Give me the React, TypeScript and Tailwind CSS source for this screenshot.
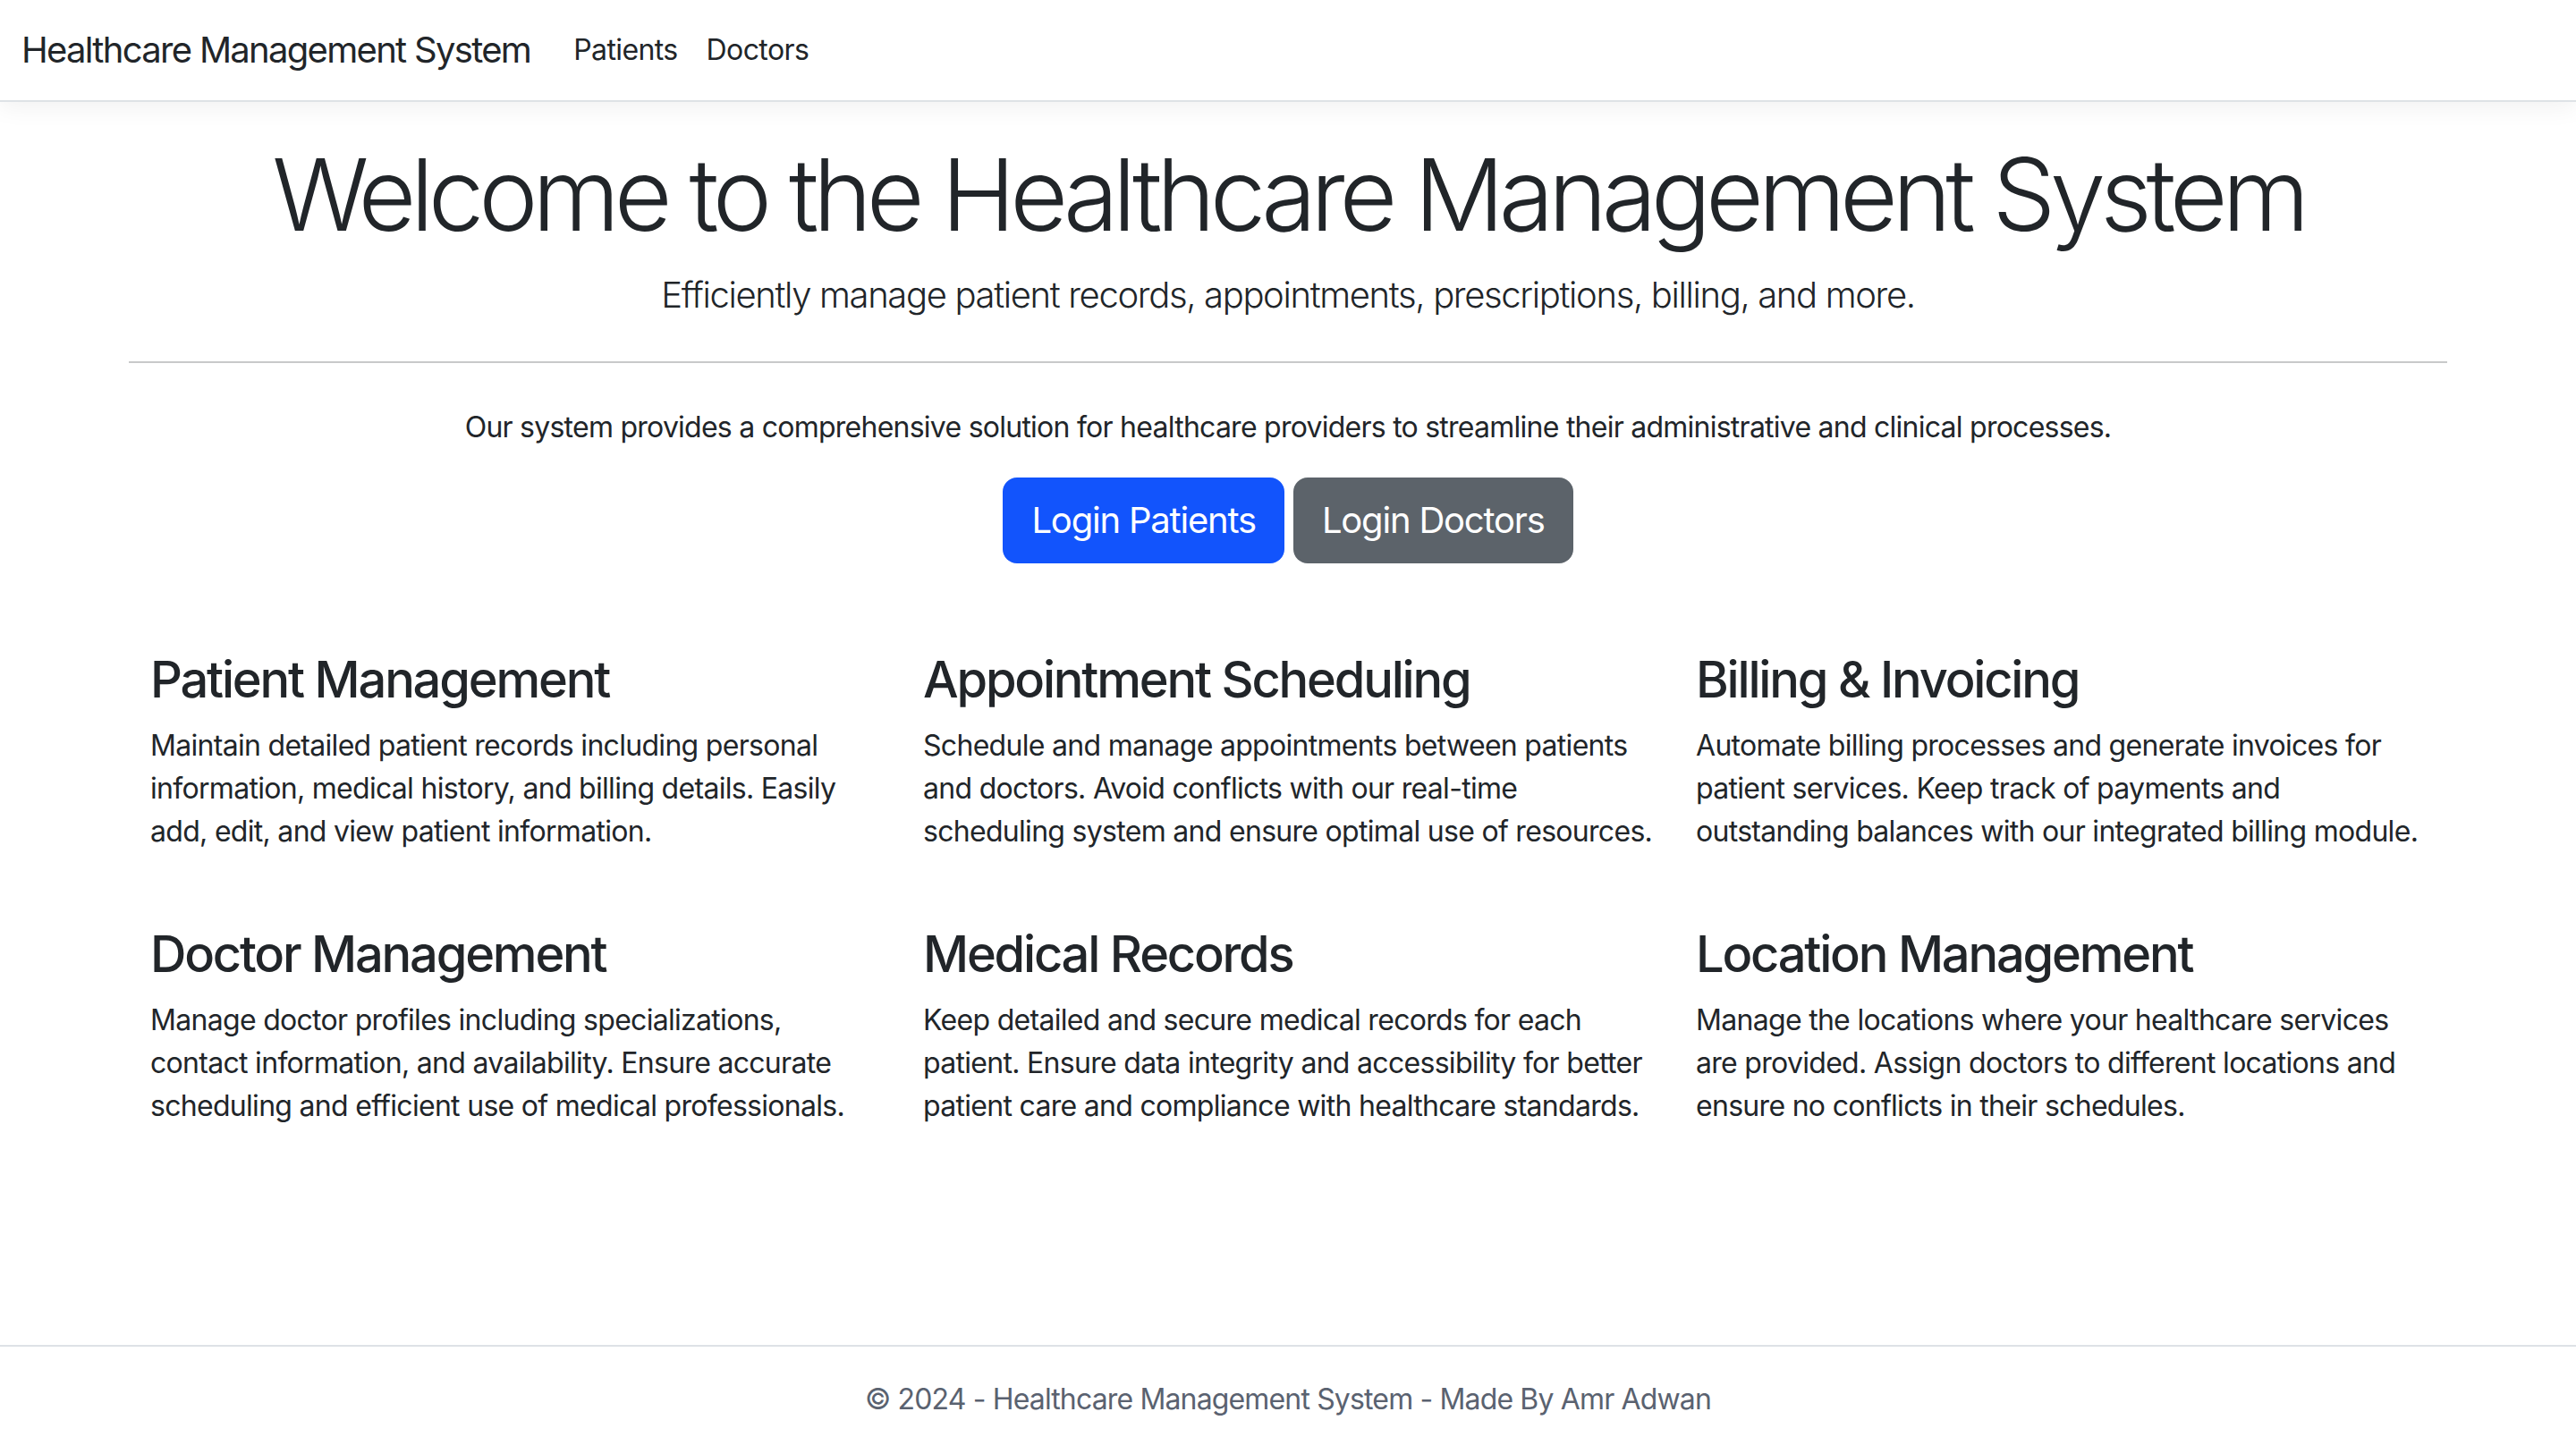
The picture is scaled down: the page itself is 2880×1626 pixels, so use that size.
const features = [
  {
    title: "Patient Management",
    text: "Maintain detailed patient records including personal information, medical history, and billing details. Easily add, edit, and view patient information.",
  },
  {
    title: "Appointment Scheduling",
    text: "Schedule and manage appointments between patients and doctors. Avoid conflicts with our real-time scheduling system and ensure optimal use of resources.",
  },
  {
    title: "Billing & Invoicing",
    text: "Automate billing processes and generate invoices for patient services. Keep track of payments and outstanding balances with our integrated billing module.",
  },
  {
    title: "Doctor Management",
    text: "Manage doctor profiles including specializations, contact information, and availability. Ensure accurate scheduling and efficient use of medical professionals.",
  },
  {
    title: "Medical Records",
    text: "Keep detailed and secure medical records for each patient. Ensure data integrity and accessibility for better patient care and compliance with healthcare standards.",
  },
  {
    title: "Location Management",
    text: "Manage the locations where your healthcare services are provided. Assign doctors to different locations and ensure no conflicts in their schedules.",
  },
]

const Navbar = () => {
  return (
    <nav className="relative z-10 h-[114px] bg-white border-b-2 border-[#dee2e6] shadow-[0_8px_24px_rgba(0,0,0,0.05)]">
      <div className="h-full px-6 flex items-center">
        <a href="#" className="text-[40px] leading-[60px] tracking-[-1.7px] text-[#212529] mr-8">Healthcare Management System</a>
        <a href="#" className="text-[32px] leading-[48px] tracking-[-0.6px] text-[#212529] px-4">Patients</a>
        <a href="#" className="text-[32px] leading-[48px] tracking-[-0.6px] text-[#212529] px-4">Doctors</a>
      </div>
    </nav>
  )
}

const App = () => {
  return (
    <div className="min-h-screen flex flex-col bg-white text-[#212529] font-['Inter','Liberation_Sans',sans-serif]">
      <Navbar />
      <main className="w-[2640px] mx-auto px-6 pt-[36px]">
        <div className="text-center">
          <h1 className="text-[112px] leading-[134px] font-light tracking-[-6.3px] mb-4">Welcome to the Healthcare Management System</h1>
          <p className="text-[40px] leading-[60px] font-light tracking-[-1.35px]">Efficiently manage patient records, appointments, prescriptions, billing, and more.</p>
          <hr className="mt-[44px] mb-12 border-t-2 border-[#c8c9ca]" />
          <p className="text-[32px] leading-[48px] tracking-[-0.75px] mb-8">Our system provides a comprehensive solution for healthcare providers to streamline their administrative and clinical processes.</p>
          <div className="flex justify-center gap-[10px]">
            <a href="#" className="h-[96px] px-8 flex items-center rounded-2xl bg-[#1254fc] text-white text-[40px] tracking-[-1.2px]">Login Patients</a>
            <a href="#" className="h-[96px] px-8 flex items-center rounded-2xl bg-[#5c636a] text-white text-[40px] tracking-[-1.2px]">Login Doctors</a>
          </div>
        </div>
        <div className="mt-[97px] grid grid-cols-3">
          {features.map((f) => (
            <div key={f.title} className="px-6 mb-12">
              <h3 className="text-[56px] leading-[67px] font-medium tracking-[-2.2px] mb-4">{f.title}</h3>
              <p className="text-[32px] leading-[48px] tracking-[-0.7px] mb-8">{f.text}</p>
            </div>
          ))}
        </div>
      </main>
      <footer className="mt-auto border-t-2 border-[#dee2e6] pt-[35px] pb-[37px] text-center text-[32px] leading-[48px] tracking-[-0.85px] text-[#5a6270]">
        © 2024 - Healthcare Management System - Made By Amr Adwan
      </footer>
    </div>
  )
}

export default App
